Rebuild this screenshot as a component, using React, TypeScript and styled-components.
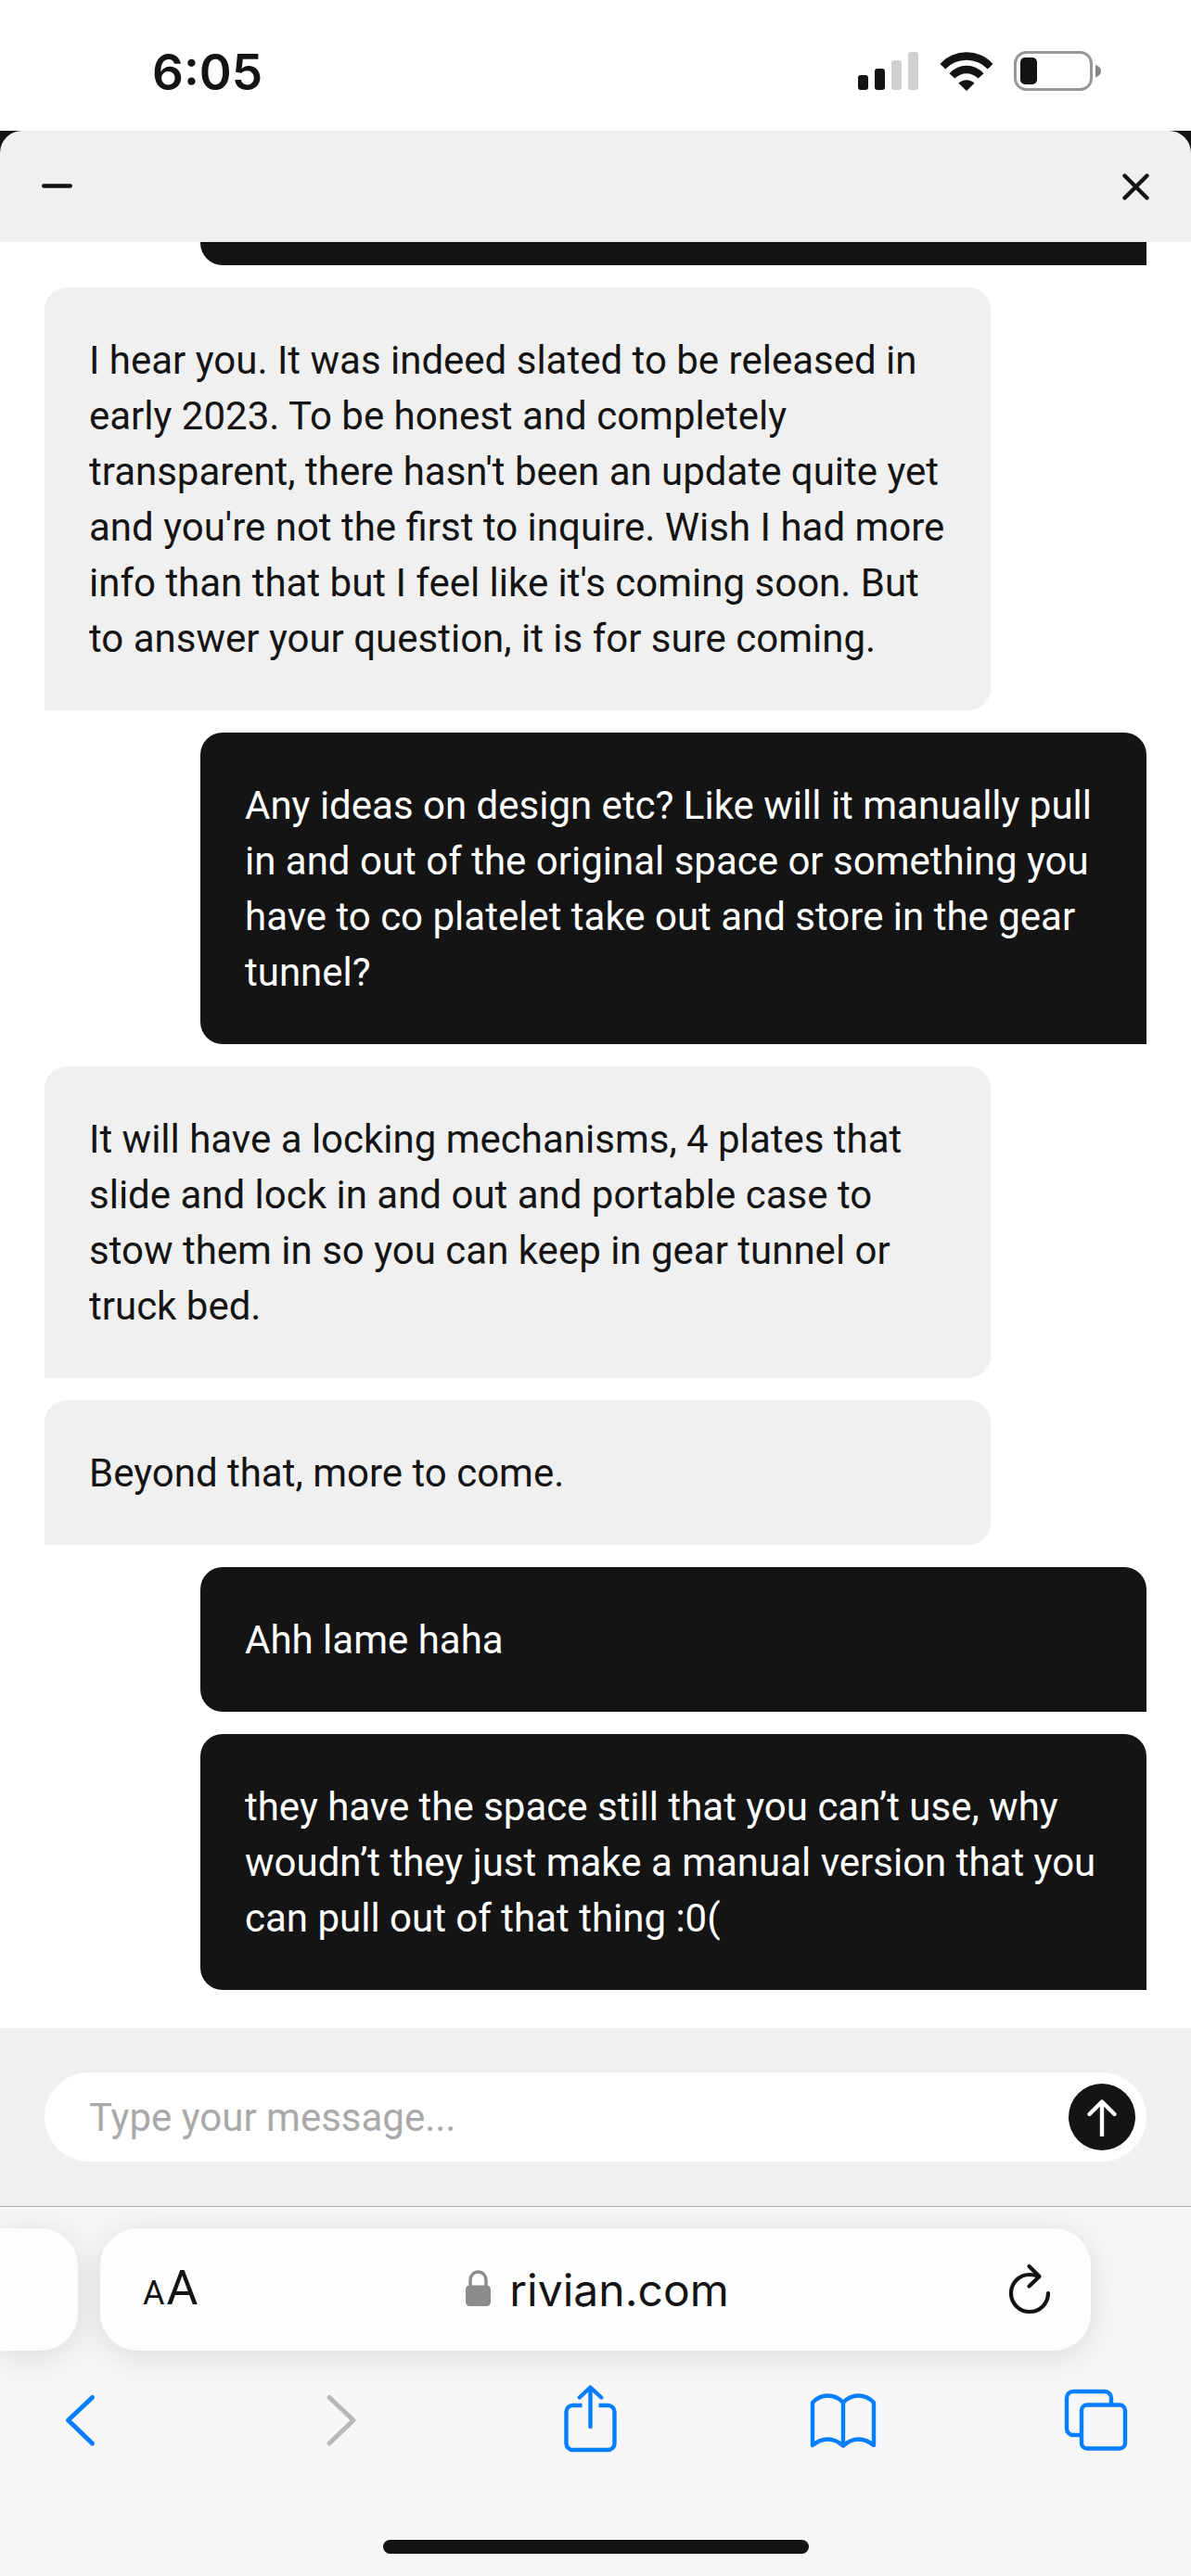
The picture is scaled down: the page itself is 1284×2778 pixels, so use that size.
import React, { useState } from "react";
import styled, { createGlobalStyle } from "styled-components";

const INK = "#141414";
const MIST = "#f0f0f0";
const BLUE = "#057eff";

const GlobalStyle = createGlobalStyle`
  *, *::before, *::after { box-sizing: border-box; }
  body {
    margin: 0;
    background: #ffffff;
    color: ${INK};
    font-family: Roboto, "Liberation Sans", sans-serif;
  }
  svg { display: block; flex: none; }
`;

const PlainButton = styled.button`
  padding: 0;
  border: 0;
  background: none;
  color: inherit;
  font: inherit;
  cursor: pointer;
`;

const Screen = styled.div`
  display: flex;
  flex-direction: column;
  min-height: 100vh;
`;

const StatusBar = styled.div`
  display: flex;
  align-items: center;
  justify-content: space-between;
  height: 141px;
  padding: 12px 97px 0 164px;
`;

const Clock = styled.time`
  padding-top: 2px;
  font: 600 53px/60px Inter, sans-serif;
`;

const StatusIcons = styled.div`
  display: flex;
  align-items: center;
  gap: 22px;
`;

const ChatFrame = styled.div`
  background: ${INK};
`;

const ChatHeader = styled.header`
  display: flex;
  align-items: center;
  justify-content: space-between;
  height: 120px;
  padding: 0 45px;
  border-radius: 24px 24px 0 0;
  background: ${MIST};
`;

const Thread = styled.main`
  display: flex;
  flex: 1;
  flex-direction: column;
  gap: 24px;
  padding: 0 48px 41px;
  background: #ffffff;
`;

const Bubble = styled.p<{ $mine: boolean }>`
  width: calc(100% - 168px);
  margin: 0;
  padding: 49px 48px 47px;
  align-self: ${(p) => (p.$mine ? "flex-end" : "flex-start")};
  border-radius: ${(p) => (p.$mine ? "24px 24px 0 24px" : "24px 24px 24px 0")};
  background: ${(p) => (p.$mine ? INK : MIST)};
  color: ${(p) => (p.$mine ? "#ffffff" : INK)};
  font-size: 42px;
  line-height: 60px;
`;

/* The tail of the message that is scrolled under the header. */
const ScrolledBubble = styled.div`
  width: calc(100% - 168px);
  height: 25px;
  align-self: flex-end;
  border-radius: 0 0 0 24px;
  background: ${INK};
`;

const Composer = styled.form`
  padding: 48px;
  border-bottom: 1px solid #b0b0b0;
  background: ${MIST};
`;

const Field = styled.div`
  display: flex;
  align-items: center;
  gap: 24px;
  height: 96px;
  padding: 0 12px 0 48px;
  border-radius: 48px;
  background: #ffffff;
`;

const MessageInput = styled.input`
  flex: 1;
  min-width: 0;
  padding: 2px 0 0;
  border: 0;
  outline: 0;
  background: transparent;
  color: ${INK};
  font: 42px/60px Roboto, "Liberation Sans", sans-serif;
  &::placeholder { color: #a9a9a9; opacity: 1; }
`;

const SendButton = styled(PlainButton)`
  display: grid;
  place-items: center;
  width: 72px;
  height: 72px;
  border-radius: 50%;
  background: ${INK};
`;

const BrowserBar = styled.footer`
  display: flex;
  flex-direction: column;
  padding: 23px 0 24px;
  overflow: hidden;
  background: #f7f7f7;
`;

const Tabs = styled.div`
  display: flex;
  gap: 24px;
  padding-right: 108px;
`;

const TabCard = styled.div`
  height: 132px;
  background: #fdfdfd;
  box-shadow: 0 6px 36px rgba(0, 0, 0, 0.12);
`;

const PreviousTab = styled(TabCard)`
  width: 84px;
  border-radius: 0 40px 40px 0;
`;

const CurrentTab = styled(TabCard)`
  display: grid;
  flex: 1;
  grid-template-columns: 1fr auto 1fr;
  align-items: center;
  padding: 0 44px;
  border-radius: 40px;
`;

const TextSizeButton = styled(PlainButton)`
  display: flex;
  align-items: baseline;
  justify-self: start;
  gap: 2px;
  padding: 2px 0 0 2px;
  font-size: 52px;
  line-height: 60px;
`;

const SmallLetter = styled.span`
  font-size: 36px;
`;

const Address = styled.a`
  display: flex;
  align-items: baseline;
  gap: 20px;
  padding: 2px 0 0 4px;
  color: ${INK};
  font: 48px/60px Inter, sans-serif;
  text-decoration: none;
`;

const ReloadButton = styled(PlainButton)`
  justify-self: end;
`;

const Toolbar = styled.nav`
  display: flex;
  justify-content: space-between;
  padding: 37px 64px 0 49px;
  color: ${BLUE};
`;

const ToolButton = styled(PlainButton)`
  &:disabled { color: #b8b8b8; }
`;

const HomeIndicator = styled.div`
  width: 459px;
  height: 15px;
  margin: 91px auto 0;
  border-radius: 8px;
  background: ${INK};
`;

const messages = [
  {
    mine: false,
    text: "I hear you. It was indeed slated to be released in early 2023. To be honest and completely transparent, there hasn't been an update quite yet and you're not the first to inquire. Wish I had more info than that but I feel like it's coming soon. But to answer your question, it is for sure coming.",
  },
  {
    mine: true,
    text: "Any ideas on design etc? Like will it manually pull in and out of the original space or something you have to co platelet take out and store in the gear tunnel?",
  },
  {
    mine: false,
    text: "It will have a locking mechanisms, 4 plates that slide and lock in and out and portable case to stow them in so you can keep in gear tunnel or truck bed.",
  },
  { mine: false, text: "Beyond that, more to come." },
  { mine: true, text: "Ahh lame haha" },
  {
    mine: true,
    text: "they have the space still that you can’t use, why woudn’t they just make a manual version that you can pull out of that thing :0(",
  },
];

const SignalIcon = () => (
  <svg width="66" height="42" viewBox="0 0 66 42" fill={INK} aria-hidden="true">
    <rect x="0" y="25" width="11" height="16" rx="3" />
    <rect x="18" y="18" width="11" height="23" rx="3" />
    <rect x="36" y="9" width="11" height="32" rx="3" fill="#d0d0d0" />
    <rect x="54" y="0" width="11" height="41" rx="3" fill="#d0d0d0" />
  </svg>
);

const WifiIcon = () => (
  <svg width="58" height="42" viewBox="0 0 58 42" fill={INK} aria-hidden="true">
    <path d="M.5 13A38 38 0 0 1 57.5 13L51.8 18.4A31.5 31.5 0 0 0 6.2 18.4Z" />
    <path d="M10.5 23.2A24.5 24.5 0 0 1 47.5 23.2L41.7 28.6A17.8 17.8 0 0 0 16.3 28.6Z" />
    <path d="M20.5 33.8A12 12 0 0 1 37.5 33.8L29 42Z" />
  </svg>
);

const BatteryIcon = () => (
  <svg width="94" height="43" viewBox="0 0 94 43" aria-hidden="true">
    <rect x="1.5" y="1.5" width="82" height="40" rx="12" fill="none" stroke="#979797" strokeWidth="3" />
    <rect x="7" y="7" width="18" height="29" rx="5" fill={INK} />
    <path d="M88 15Q94 17 94 21.5T88 28.5Z" fill="#858585" />
  </svg>
);

const stroke = {
  fill: "none",
  stroke: "currentColor",
  strokeLinecap: "round",
  strokeLinejoin: "round",
  "aria-hidden": true,
} as const;

const MinimizeIcon = () => (
  <svg width="33" height="28" viewBox="0 0 33 28" {...stroke} strokeWidth="4.5">
    <path d="M2.2 13.5H30.8" />
  </svg>
);

const CloseIcon = () => (
  <svg width="29" height="29" viewBox="0 0 29 29" {...stroke} strokeWidth="4.4">
    <path d="M2.500 2.500L26.500 26.500M26.500 2.500L2.500 26.500" />
  </svg>
);

const SendIcon = () => (
  <svg width="34" height="42" viewBox="0 0 34 42" {...stroke} strokeWidth="4.4" stroke="#ffffff">
    <path d="M17 42V4" strokeLinecap="butt" />
    <path d="M3.5 18L17 4.5L30.5 18" />
  </svg>
);

const LockIcon = () => (
  <svg width="27" height="39" viewBox="0 0 27 39" aria-hidden="true">
    <path d="M5 19V11A8.5 9 0 0 1 22 11V19" fill="none" stroke="#8c8c8c" strokeWidth="3.4" />
    <rect y="16.5" width="27" height="22.5" rx="4.5" fill="#8c8c8c" />
  </svg>
);

const ReloadIcon = () => (
  <svg width="44" height="56" viewBox="0 0 44 56" {...stroke} strokeWidth="4.2">
    <path d="M42 32A20 20 0 1 1 22 12Q28 12 32 14" />
    <path d="M21.5 3L32.5 14L21.5 24.5" />
  </svg>
);

const BackIcon = () => (
  <svg width="76" height="76" viewBox="0 0 76 76" {...stroke} strokeWidth="5">
    <path d="M50.5 13.5L24.5 38L50.5 63" />
  </svg>
);

const ForwardIcon = () => (
  <svg width="76" height="76" viewBox="0 0 76 76" {...stroke} strokeWidth="5">
    <path d="M32 13.5L58 38L32 63" />
  </svg>
);

const ShareIcon = () => (
  <svg width="76" height="76" viewBox="0 0 76 76" {...stroke} strokeWidth="4.4">
    <path
      d="M30.5 22H20.5A7 7 0 0 0 13.5 29V63A7 7 0 0 0 20.5 70H58.5A7 7 0 0 0 65.5 63V29A7 7 0 0 0 58.5 22H48.5"
      strokeLinecap="butt"
    />
    <path d="M39.5 45V3M27.8 13.5L39.5 2.5L51.2 13.5" />
  </svg>
);

const BookIcon = () => (
  <svg width="76" height="76" viewBox="0 0 76 76" {...stroke} strokeWidth="4.4">
    <path d="M6 65V19Q13 11.5 22.5 11.5T39 19Q46 11.5 55.5 11.5T72 19V65Q64 58.5 55.5 58.5T39 65.5Q31 58.5 22.5 58.5T6 65M39 19V65" />
  </svg>
);

const TabsIcon = () => (
  <svg width="76" height="76" viewBox="0 0 76 76" {...stroke} strokeWidth="4.4">
    <path d="M22 54H13A7 7 0 0 1 6 47V14A7 7 0 0 1 13 7H47A7 7 0 0 1 54 14V21" strokeLinecap="butt" />
    <rect x="22" y="21.5" width="47" height="47" rx="6" />
  </svg>
);

export default function App() {
  const [draft, setDraft] = useState("");

  return (
    <Screen>
      <GlobalStyle />
      <StatusBar>
        <Clock>6:05</Clock>
        <StatusIcons>
          <SignalIcon />
          <WifiIcon />
          <BatteryIcon />
        </StatusIcons>
      </StatusBar>

      <ChatFrame>
        <ChatHeader>
          <PlainButton type="button" aria-label="Minimize chat"><MinimizeIcon /></PlainButton>
          <PlainButton type="button" aria-label="Close chat"><CloseIcon /></PlainButton>
        </ChatHeader>
      </ChatFrame>

      <Thread>
        <ScrolledBubble />
        {messages.map((m) => (
          <Bubble key={m.text} $mine={m.mine}>{m.text}</Bubble>
        ))}
      </Thread>

      <Composer onSubmit={(e) => { e.preventDefault(); setDraft(""); }}>
        <Field>
          <MessageInput
            aria-label="Message"
            placeholder="Type your message..."
            value={draft}
            onChange={(e) => setDraft(e.target.value)}
          />
          <SendButton type="submit" aria-label="Send"><SendIcon /></SendButton>
        </Field>
      </Composer>

      <BrowserBar>
        <Tabs>
          <PreviousTab />
          <CurrentTab>
            <TextSizeButton type="button" aria-label="Page settings">
              <SmallLetter>A</SmallLetter>
              <span>A</span>
            </TextSizeButton>
            <Address href="#">
              <LockIcon />
              rivian.com
            </Address>
            <ReloadButton type="button" aria-label="Reload"><ReloadIcon /></ReloadButton>
          </CurrentTab>
        </Tabs>
        <Toolbar>
          <ToolButton type="button" aria-label="Back"><BackIcon /></ToolButton>
          <ToolButton type="button" aria-label="Forward" disabled><ForwardIcon /></ToolButton>
          <ToolButton type="button" aria-label="Share"><ShareIcon /></ToolButton>
          <ToolButton type="button" aria-label="Bookmarks"><BookIcon /></ToolButton>
          <ToolButton type="button" aria-label="Tabs"><TabsIcon /></ToolButton>
        </Toolbar>
        <HomeIndicator />
      </BrowserBar>
    </Screen>
  );
}
